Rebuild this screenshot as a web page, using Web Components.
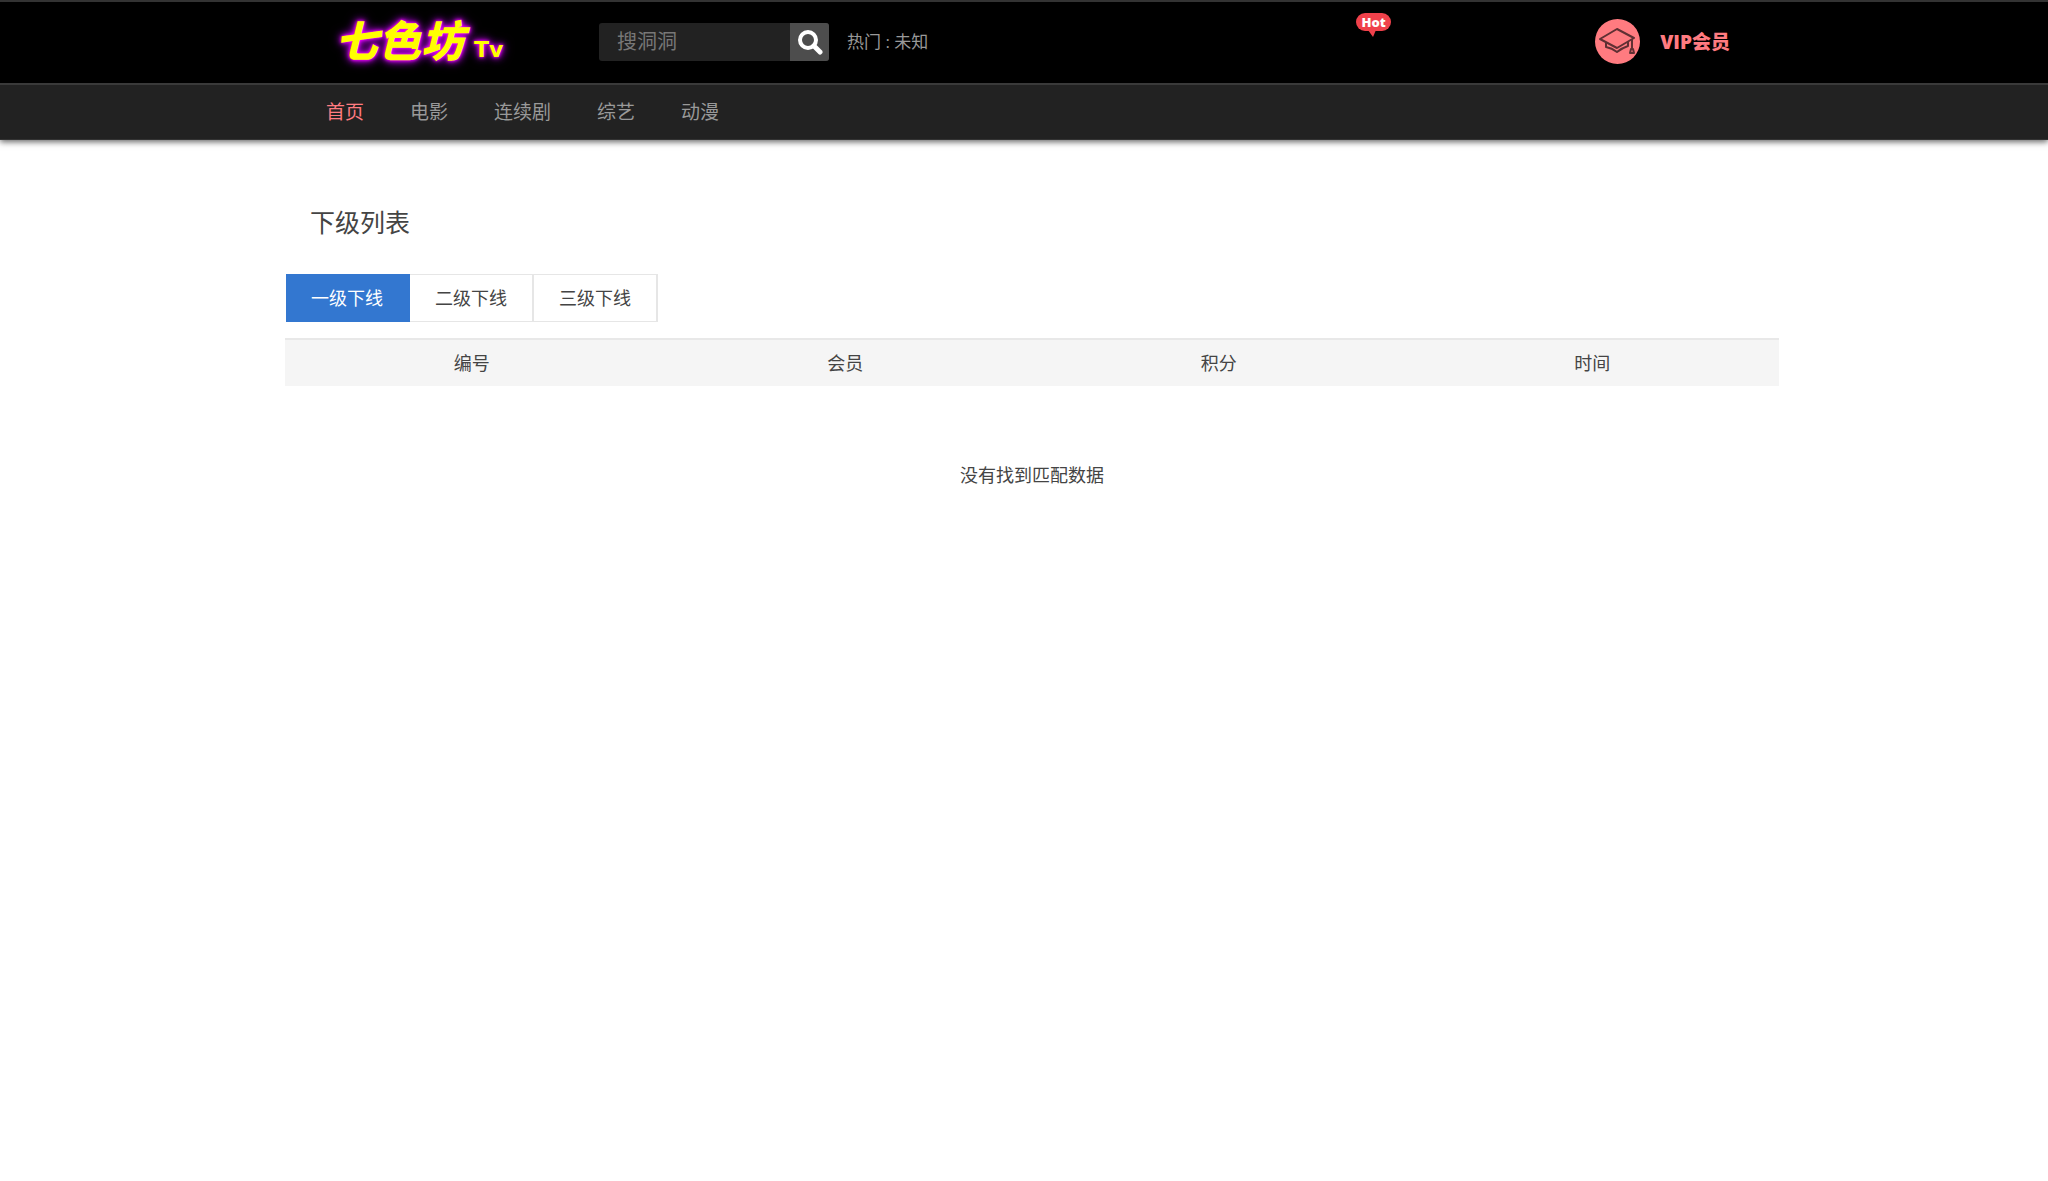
<!DOCTYPE html>
<html lang="zh-CN">
<head>
<meta charset="utf-8">
<title>下级列表</title>
<style>
  body { margin: 0; background: #fff; color: #444; font-family: "Open Sans", "Noto Sans CJK SC", sans-serif; --shell: 1494px; --shift: 16px; --accent: #ff7b80; }
</style>
</head>
<body>
<site-header>
  <site-logo></site-logo>
  <site-search></site-search>
  <hot-tag></hot-tag>
  <vip-link></vip-link>
</site-header>
<site-nav></site-nav>
<page-shell>
  <level-tabs></level-tabs>
  <member-table></member-table>
</page-shell>
<script>
  function define(name, markup) {
    const template = document.createElement('template');
    template.innerHTML = markup;
    customElements.define(name, class extends HTMLElement {
      constructor() {
        super();
        this.attachShadow({ mode: 'open' }).append(template.content.cloneNode(true));
      }
    });
  }

  define('site-header', `
    <style>
      :host { display: block; box-sizing: border-box; background: #000; border-top: 2px solid #333; padding-left: var(--shift); }
      header { box-sizing: border-box; max-width: var(--shell); height: 81px; margin: 0 auto; padding: 0 49px 2px 50px; display: flex; align-items: center; }
    </style>
    <header><slot></slot></header>`);

  define('site-logo', `
    <style>
      :host { display: block; width: 264px; flex: none; }
      a { display: flex; align-items: baseline; gap: 10px; color: #ff0; text-decoration: none; line-height: 60px; padding-top: 4px;
          text-shadow: 0 0 3px #f0f, 0 0 5px #d0f, 0 0 8px #a0d, 0 0 12px #80a; }
      .name { font-size: 43px; font-weight: 900; font-style: italic; font-family: "Noto Sans CJK SC", sans-serif; }
      .tv { font-size: 22px; font-weight: bold; font-family: "DejaVu Sans", sans-serif; }
    </style>
    <a href="#"><span class="name">七色坊</span><span class="tv">Tv</span></a>`);

  define('site-search', `
    <style>
      :host { display: flex; align-items: center; gap: 18px; flex: none; color: #999; font-size: 17px; line-height: 24px; }
      form { display: flex; width: 230px; height: 38px; border-radius: 3px; overflow: hidden; background: #222; }
      input { flex: 1; min-width: 0; border: 0; padding: 0 18px; background: none; color: #ccc; font: inherit; font-size: 20px; outline: 0; }
      input::placeholder { color: #777; opacity: 1; }
      button { width: 39px; border: 0; padding: 0; background: #4d4d4d; display: flex; align-items: center; justify-content: center; }
      svg { display: block; }
    </style>
    <form role="search">
      <input type="text" aria-label="搜索" placeholder="搜洞洞">
      <button type="button" aria-label="搜索">
        <svg width="26" height="26" viewBox="0 0 26 26" fill="none" stroke="#fff" stroke-width="4"><circle cx="11" cy="11" r="8"/><path d="M17 17l6 6" stroke-width="5" stroke-linecap="round"/></svg>
      </button>
    </form>
    <span>热门 : 未知</span>`);

  define('hot-tag', `
    <style>
      :host { display: block; flex: none; align-self: flex-start; margin: 11px 204px 0 auto; }
      span { display: block; position: relative; width: 35px; height: 18px; border-radius: 9px; background: #f0414b; color: #fff; text-align: center; font: 800 13px/18px "Open Sans", sans-serif; }
      svg { position: absolute; left: 12px; top: 17px; }
    </style>
    <span>Hot<svg width="9" height="7" viewBox="0 0 9 7"><path d="M0 0H8L5 7Z" fill="#f0414b"/></svg></span>`);

  define('vip-link', `
    <style>
      :host { display: block; flex: none; }
      a { display: flex; align-items: center; gap: 20px; color: var(--accent); text-decoration: none; font-size: 19px; line-height: 24px; font-weight: 800; }
      svg { display: block; }
    </style>
    <a href="#">
      <svg width="45" height="45" viewBox="0 0 45 45" fill="none" stroke="#603033" stroke-width="2" stroke-linejoin="round" stroke-linecap="round">
        <circle cx="22.5" cy="22.5" r="22.5" fill="#ff7b80" stroke="none"/>
        <path d="M5 20L22 10L39 19L22 29Z"/>
        <path d="M11 24V28Q17 29 22 33Q27 29 33 27V23"/>
        <path d="M37 21V29M36 30H38L39 34H35Z"/>
      </svg>
      <span>VIP会员</span>
    </a>`);

  define('site-nav', `
    <style>
      :host { display: block; position: relative; background: #222; border-top: 2px solid #3a3a3a; border-bottom: 1px solid #333; padding-left: var(--shift); box-shadow: 0 2px 6px rgba(0,0,0,.6); }
      nav { box-sizing: border-box; max-width: var(--shell); height: 54px; margin: 0 auto; padding: 0 41px; display: flex; align-items: center; gap: 46px; }
      a { color: #999; text-decoration: none; font-size: 19px; line-height: 28px; }
      a[aria-current] { color: var(--accent); }
    </style>
    <nav>
      <a href="#" aria-current="page">首页</a><a href="#">电影</a><a href="#">连续剧</a><a href="#">综艺</a><a href="#">动漫</a>
    </nav>`);

  define('page-shell', `
    <style>
      :host { display: block; padding-left: var(--shift); }
      main { max-width: var(--shell); margin: 0 auto; padding-top: 64px; }
      h1 { margin: 0; padding: 0 25px; font-size: 25px; font-weight: 400; line-height: 36px; }
    </style>
    <main><h1>下级列表</h1><slot></slot></main>`);

  define('level-tabs', `
    <style>
      :host { display: flex; margin: 34px 0 16px; padding-left: 1px; }
      button { box-sizing: border-box; height: 48px; padding: 0 25px; border: 1px solid #e6e6e6; border-width: 1px 2px 1px 0; background: #fff; color: #444; font: inherit; font-size: 18px; line-height: 26px; }
      button[aria-selected="true"] { background: #3377d0; border-color: #3377d0; color: #fff; }
    </style>
    <button role="tab" aria-selected="true">一级下线</button><button role="tab" aria-selected="false">二级下线</button><button role="tab" aria-selected="false">三级下线</button>`);

  define('member-table', `
    <style>
      :host { display: block; }
      table { width: 100%; table-layout: fixed; border-collapse: separate; border-spacing: 0; font-size: 18px; line-height: 26px; text-align: center; }
      th { box-sizing: border-box; height: 48px; padding: 0; font-weight: 400; background: #f5f5f5; border-top: 2px solid #e8e8e8; }
      td { padding: 76px 0; }
    </style>
    <table>
      <thead><tr><th scope="col">编号</th><th scope="col">会员</th><th scope="col">积分</th><th scope="col">时间</th></tr></thead>
      <tbody><tr><td colspan="4">没有找到匹配数据</td></tr></tbody>
    </table>`);
</script>
</body>
</html>
